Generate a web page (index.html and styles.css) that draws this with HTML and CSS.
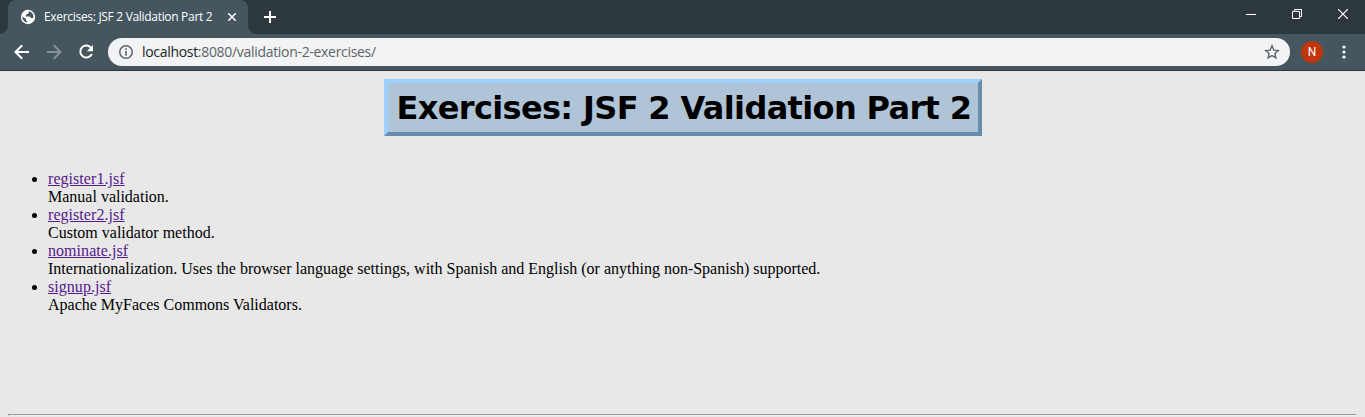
FILE: index.html
```html
<!DOCTYPE html>
<html lang="en">
<head>
<meta charset="utf-8">
<title>Exercises: JSF 2 Validation Part 2</title>
<link rel="stylesheet" href="styles.css">
</head>
<body>
<header class="browser">
  <div class="tabstrip">
    <div class="tab">
      <svg class="globe" width="16" height="16" viewBox="0 0 16 16"><circle cx="8" cy="8" r="7.2" fill="#fff"/><path d="M9 2.2C8.4 3 9.3 3.8 8.2 4.5 7.5 5 6.4 4.8 6.3 5.8c0 .8-.9 1-.8 1.7h3.8c1 0 .8 1.2 1.6 1.4.9.1 2 .2 2.4-.2C13.800 5.400 12 3 9 2.200zM2.300 7.500c0 3 2 5.700 5 6.100v-1.300c-.9 0-1.300-.6-1.300-1.400v-.8z" fill="#45565f"/></svg>
      <span class="tab-title">Exercises: JSF 2 Validation Part 2</span>
      <svg class="tab-close" width="10" height="10" viewBox="0 0 10 10"><path d="M1.300 1.300l7.400 7.400M8.700 1.300L1.300 8.700" stroke="#fff" stroke-width="1.600"/></svg>
      <i class="flare flare-left"></i><i class="flare flare-right"></i>
    </div>
    <svg class="new-tab" width="12" height="12" viewBox="0 0 12 12"><path d="M6 0v12M0 6h12" stroke="#fff" stroke-width="2"/></svg>
    <div class="window-buttons">
      <svg width="10" height="10" viewBox="0 0 10 10"><path d="M0 5.500h10" stroke="#fff"/></svg>
      <svg width="10" height="10" viewBox="0 0 10 10" fill="none" stroke="#fff"><path d="M.5 2.500h7v7h-7zM2.500 2.500v-2h7v7h-2"/></svg>
      <svg width="10" height="10" viewBox="0 0 10 10"><path d="M0 0l10 10M10 0L0 10" stroke="#fff" stroke-width="1.200"/></svg>
    </div>
  </div>
  <div class="toolbar">
    <svg class="nav" width="24" height="24" viewBox="0 0 24 24"><path d="M19 12H6M12.200 5.300L5.500 12l6.700 6.700" fill="none" stroke="#fff" stroke-width="2"/></svg>
    <svg class="nav" width="24" height="24" viewBox="0 0 24 24"><path d="M5 12h13M11.800 5.300l6.700 6.700-6.700 6.700" fill="none" stroke="#869198" stroke-width="2"/></svg>
    <svg class="nav" width="24" height="24" viewBox="0 0 24 24"><path d="M17.300 8.200A6 6 0 1 0 17.800 14" fill="none" stroke="#fff" stroke-width="2"/><path d="M19 5v6.200h-6.200z" fill="#fff"/></svg>
    <div class="omnibox">
      <svg width="14" height="14" viewBox="0 0 14 14"><circle cx="7" cy="7" r="6.250" fill="none" stroke="#5f6368" stroke-width="1.500"/><path d="M6.200 3.300h1.600v1.600H6.200zM6.200 6.100h1.600v4.600H6.200z" fill="#5f6368"/></svg>
      <span class="url"><b>localhost</b>:8080/validation-2-exercises/</span>
      <svg class="star" width="16" height="16" viewBox="0 0 16 16"><path d="M8 1.900l1.800 4.200 4.500.4-3.400 3 1 4.400L8 11.600l-3.900 2.300 1-4.400-3.400-3 4.500-.4z" fill="none" stroke="#5f6368" stroke-width="1.400"/></svg>
    </div>
    <div class="avatar">N</div>
    <svg class="menu" width="4" height="14" viewBox="0 0 4 14" fill="#fff"><circle cx="2" cy="2" r="1.600"/><circle cx="2" cy="7" r="1.600"/><circle cx="2" cy="12" r="1.600"/></svg>
  </div>
</header>
<main class="page">
  <h1 class="title">Exercises: JSF 2 Validation Part 2</h1>
  <ul class="exercises">
    <li><a href="#">register1.jsf</a><br>Manual validation.</li>
    <li><a href="#">register2.jsf</a><br>Custom validator method.</li>
    <li><a href="#">nominate.jsf</a><br>Internationalization. Uses the browser language settings, with Spanish and English (or anything non-Spanish) supported.</li>
    <li><a href="#">signup.jsf</a><br>Apache MyFaces Commons Validators.</li>
  </ul>
  <hr class="rule">
</main>
</body>
</html>
```
FILE: styles.css
```css
* { box-sizing: border-box; }
body { margin: 0; height: 417px; overflow: hidden; background: #e8e8e8; color: #000; }
svg { display: block; flex: none; }
.browser { height: 71px; background: #45565f; border-bottom: 1px solid #2d383e; font-family: "Open Sans", "Noto Sans", sans-serif; }
.tabstrip { display: flex; align-items: center; height: 34px; padding-left: 8px; background: #2d383e; }
.tab { position: relative; display: flex; align-items: center; width: 240px; height: 34px; padding-left: 12px; background: #45565f; border-radius: 8px 8px 0 0; color: #fff; }
.tab-title { width: 168px; margin-left: 8px; font-size: 12px; letter-spacing: -0.31px; line-height: 34px; white-space: nowrap; }
.tab-close { margin-left: 15px; }
.flare { position: absolute; bottom: 0; width: 8px; height: 8px; }
.flare-left { left: -8px; background: radial-gradient(circle at 0 0, #2d383e 7.5px, #45565f 8px); }
.flare-right { right: -8px; background: radial-gradient(circle at 100% 0, #2d383e 7.5px, #45565f 8px); }
.new-tab { margin-left: 16px; }
.window-buttons { display: flex; gap: 36px; height: 28px; align-items: center; align-self: flex-start; margin-left: auto; padding-right: 17px; }
.toolbar { display: flex; align-items: center; height: 36px; padding: 0 19px 0 10px; }
.nav { margin-right: 8px; }
.omnibox { display: flex; align-items: center; width: 1182px; height: 28px; margin-left: 2px; padding: 0 10px 0 11px; border-radius: 14px; background: #f1f3f4; }
.url { margin-left: 9px; font-size: 14px; line-height: 28px; letter-spacing: -0.31px; color: #5f6368; white-space: nowrap; }
.url b { font-weight: 400; color: #202124; }
.star { margin-left: auto; }
.avatar { width: 22px; height: 22px; margin-left: 11px; border-radius: 50%; background: #bf360c; color: #fff; font: 12px/22px Roboto, sans-serif; text-align: center; }
.menu { margin-left: auto; }
.page { padding: 8px 8px 0; font: 16px/18px "Liberation Serif", serif; }
.title { width: 598px; height: 57px; margin: 0 auto; padding: 0 9px; border: 4px solid; border-color: #9dcfff #688cac #688cac #9dcfff; background: #b0c4d8; font: bold 32px/50px "DejaVu Sans", sans-serif; letter-spacing: -0.65px; white-space: nowrap; }
.exercises { margin: 34px 0 0; padding-left: 40px; }
.exercises a { color: #551a8b; text-decoration: underline; letter-spacing: 0.05px; }
.rule { margin: 100px 0 0; border: 1px solid; border-color: #9a9a9a #eee #eee #9a9a9a; }
```
